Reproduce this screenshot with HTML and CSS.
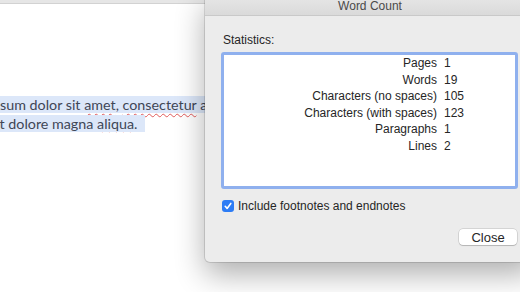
FILE: index.html
```html
<!DOCTYPE html>
<html lang="en">
<head>
  <meta charset="UTF-8">
  <title>Word Count</title>
  <link rel="stylesheet" href="styles.css">
</head>
<body>
  <div class="toolbar"></div>
  <div class="doc">
    <p class="line first"><span class="sel">sum dolor sit <u>amet</u>, <u>consectetur</u> adipiscing elit</span></p>
    <p class="line second"><span class="sel">et dolore magna <u>aliqua</u>. &nbsp;</span></p>
  </div>

  <div class="dialog">
    <div class="titlebar">Word Count</div>
    <div class="dialog-body">
      <div class="caption">Statistics:</div>
      <div class="stats">
        <span class="name">Pages</span><span class="val">1</span>
        <span class="name">Words</span><span class="val">19</span>
        <span class="name">Characters (no spaces)</span><span class="val">105</span>
        <span class="name">Characters (with spaces)</span><span class="val">123</span>
        <span class="name">Paragraphs</span><span class="val">1</span>
        <span class="name">Lines</span><span class="val">2</span>
      </div>
      <label class="check">
        <span class="box">
          <svg width="12" height="12" viewBox="0 0 12 12"><path d="M3.2 6.3 L5.1 8.4 L8.8 3.4" fill="none" stroke="#fff" stroke-width="1.6" stroke-linecap="round" stroke-linejoin="round"/></svg>
        </span>
        Include footnotes and endnotes
      </label>
      <div class="actions">
        <button class="btn">Close</button>
      </div>
    </div>
  </div>
</body>
</html>
```

FILE: styles.css
```css
body {
  margin: 0;
  width: 520px;
  height: 292px;
  overflow: hidden;
  position: relative;
  background: #fff;
  font-family: "Liberation Sans", Arial, sans-serif;
}
.toolbar {
  height: 3px;
  background: #e6e6e6;
  border-bottom: 1px solid #d2d2d2;
}
.doc {
  padding-top: 91px;
  font-family: Lato, "Open Sans", sans-serif;
  font-size: 14.3px;
  color: #3f4656;
  white-space: nowrap;
  overflow: hidden;
}
.line {
  margin: 0;
  height: 19px;
  line-height: 19px;
}
.second {
  margin-left: -8px;
}
.sel {
  background: #dce7f9;
}
.sel u {
  text-decoration: underline wavy #e05a5a;
  text-decoration-thickness: 1px;
  text-underline-offset: 3px;
}

.dialog {
  position: absolute;
  left: 205px;
  top: -6px;
  width: 330px;
  height: 268px;
  background: #ececec;
  border-radius: 5px;
  box-shadow: 0 12px 30px rgba(0, 0, 0, 0.32), 0 0 0 1px rgba(0, 0, 0, 0.12);
  color: #262626;
  font-size: 12px;
}
.titlebar {
  height: 18px;
  padding-top: 3px;
  line-height: 18px;
  text-align: center;
  color: #4a4a4a;
  background: linear-gradient(#e8e8e8, #dadada);
  border-bottom: 1px solid #c9c9c9;
  border-radius: 5px 5px 0 0;
}
.dialog-body {
  padding: 17px 0 0 16px;
  width: 297px;
}
.caption {
  margin-left: 2px;
  line-height: 14px;
  margin-bottom: 5px;
}
.stats {
  height: 131px;
  background: #fff;
  border: 3px solid #8fb0ee;
  border-radius: 3px;
  display: grid;
  grid-template-columns: 213px auto;
  column-gap: 7px;
  grid-auto-rows: 16.5px;
  align-content: start;
  line-height: 16.5px;
}
.stats .name {
  text-align: right;
}
.check {
  display: flex;
  align-items: center;
  gap: 4px;
  margin-top: 10px;
  margin-left: 1px;
  line-height: 14px;
}
.box {
  width: 12px;
  height: 12px;
  border-radius: 3px;
  background: #2d7cf5;
  display: flex;
}
.actions {
  display: flex;
  justify-content: flex-end;
  margin-top: 16px;
  margin-right: 1px;
}
.btn {
  width: 58px;
  height: 16px;
  padding: 0;
  border: none;
  border-radius: 4px;
  background: #fff;
  box-shadow: 0 0 0 0.5px rgba(0, 0, 0, 0.2), 0 1px 1px rgba(0, 0, 0, 0.15);
  font-family: "Liberation Sans", Arial, sans-serif;
  font-size: 13px;
  color: #262626;
}
```
